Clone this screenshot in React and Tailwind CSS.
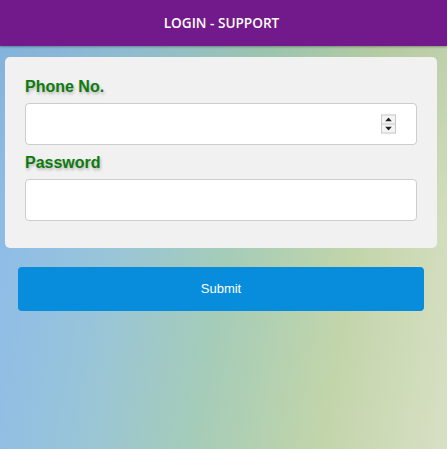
import React, { useState } from 'react';

const Spinner = () => (
  <div className="absolute right-[21px] top-1/2 -translate-y-1/2 flex flex-col w-[15px] h-[19px] border border-[#c8c8c8] bg-[#f4f4f4]">
    <div className="flex-1 flex items-center justify-center border-b border-[#c8c8c8]">
      <svg width="7" height="4" viewBox="0 0 7 4">
        <path d="M0 4 L3.5 0 L7 4 Z" fill="#222" />
      </svg>
    </div>
    <div className="flex-1 flex items-center justify-center">
      <svg width="7" height="4" viewBox="0 0 7 4">
        <path d="M0 0 L3.5 4 L7 0 Z" fill="#222" />
      </svg>
    </div>
  </div>
);

const Label = ({ children }) => (
  <label className="block text-[16px] leading-[20px] font-bold text-[#0d7a0d] [text-shadow:1px_2px_3px_rgba(0,0,0,0.25)]">
    {children}
  </label>
);

const App = () => {
  const [phone, setPhone] = useState('');
  const [password, setPassword] = useState('');

  return (
    <div className="min-h-[449px] w-full font-['Liberation_Sans',Arial,sans-serif] bg-[linear-gradient(180deg,rgba(60,110,80,0.12)_0%,rgba(60,110,80,0)_45%),linear-gradient(100deg,#8ab9ec_0%,#98c4da_28%,#a5ccb8_52%,#c2d5aa_76%,#d8e0c4_100%)]">
      <div className="h-[46px] bg-[#721a8b] flex items-center justify-center shadow-[0_1px_2px_rgba(0,0,0,0.3)]">
        <span className="text-white text-[13.6px] font-semibold font-['Open_Sans',sans-serif] -translate-x-[2px]">
          LOGIN - SUPPORT
        </span>
      </div>

      <div className="px-[5px] pt-[11px] pr-[10px]">
        <div className="bg-[#f1f1f1] rounded-[5px] px-[20px] pt-[20px] pb-[27px]">
          <Label>Phone No.</Label>
          <div className="relative mt-[6px]">
            <input
              type="text"
              value={phone}
              onChange={(e) => setPhone(e.target.value)}
              className="block w-full h-[42px] bg-white border border-[#cccccc] rounded-[4px] px-3 outline-none"
            />
            <Spinner />
          </div>
          <div className="mt-[8px]">
            <Label>Password</Label>
          </div>
          <input
            type="password"
            value={password}
            onChange={(e) => setPassword(e.target.value)}
            className="block w-full h-[42px] mt-[6px] bg-white border border-[#cccccc] rounded-[4px] px-3 outline-none"
          />
        </div>
      </div>

      <div className="px-[18px] pr-[23px] mt-[19px]">
        <button
          type="button"
          className="w-full h-[44px] bg-[#078ddc] rounded-[4px] text-white text-[13px]"
        >
          Submit
        </button>
      </div>
    </div>
  );
};

export default App;
